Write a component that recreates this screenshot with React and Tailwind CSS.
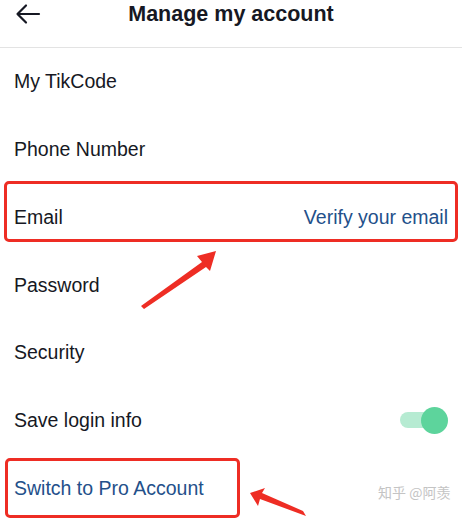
import React from "react";

const rows = [
  { label: "My TikCode" },
  { label: "Phone Number" },
  { label: "Email", right: "Verify your email" },
  { label: "Password" },
  { label: "Security" },
  { label: "Save login info", toggle: true },
  { label: "Switch to Pro Account", blue: true },
];

export default function App() {
  return (
    <div
      className="relative w-[462px] h-[518px] overflow-hidden bg-white text-[#161823]"
      style={{ fontFamily: '"Liberation Sans", Arial, sans-serif' }}
    >
      <div className="relative flex h-[48px] items-start justify-center border-b border-[#e3e3e3]">
        <svg
          className="absolute left-[15px] top-[3px]"
          width="26"
          height="22"
          viewBox="0 0 26 22"
          fill="none"
          stroke="#161823"
          strokeWidth="2.2"
          strokeLinecap="round"
          strokeLinejoin="round"
        >
          <path d="M24 11H2.5M11 2.5L2.5 11L11 19.5" />
        </svg>
        <div className="pt-[1px] text-[21.5px] font-bold leading-[26px]">Manage my account</div>
      </div>
      <div className="flex flex-col">
        {rows.map((r) => (
          <div key={r.label} className="flex h-[67.8px] items-center justify-between pl-[14px] pr-[14px]">
            <span className={`text-[19.5px] ${r.blue ? "text-[#23508a]" : ""}`}>{r.label}</span>
            {r.right && <span className="text-[19.5px] text-[#23508a]">{r.right}</span>}
            {r.toggle && (
              <div className="relative mr-[0px] h-[27px] w-[48px]">
                <div className="absolute left-0 top-[5px] h-[16px] w-[40px] rounded-full bg-[#b6ebd2]" />
                <div className="absolute right-0 top-0 h-[27px] w-[27px] rounded-full bg-[#5dd49c]" />
              </div>
            )}
          </div>
        ))}
      </div>

      <div className="absolute left-[4px] top-[181px] h-[61px] w-[454px] rounded-[5px] border-[3px] border-[#ee2d24]" />
      <div className="absolute left-[5px] top-[458px] h-[60px] w-[235px] rounded-[5px] border-[3px] border-[#ee2d24]" />

      <svg className="pointer-events-none absolute left-0 top-0" width="462" height="518" viewBox="0 0 462 518">
        <polygon points="141,306 144,309 206,267 210,271 216,251 197,256 202,262" fill="#ee2d24" />
        <polygon points="306,516 303,511 262,493 265,488 250,493 258,506 260,499" fill="#ee2d24" />
      </svg>

      <div
        className="absolute left-[378px] top-[482px] text-[14px] text-[#c4c4c4]"
        style={{ fontFamily: '"Noto Sans CJK SC", sans-serif' }}
      >
        知乎 @阿羡
      </div>
    </div>
  );
}
